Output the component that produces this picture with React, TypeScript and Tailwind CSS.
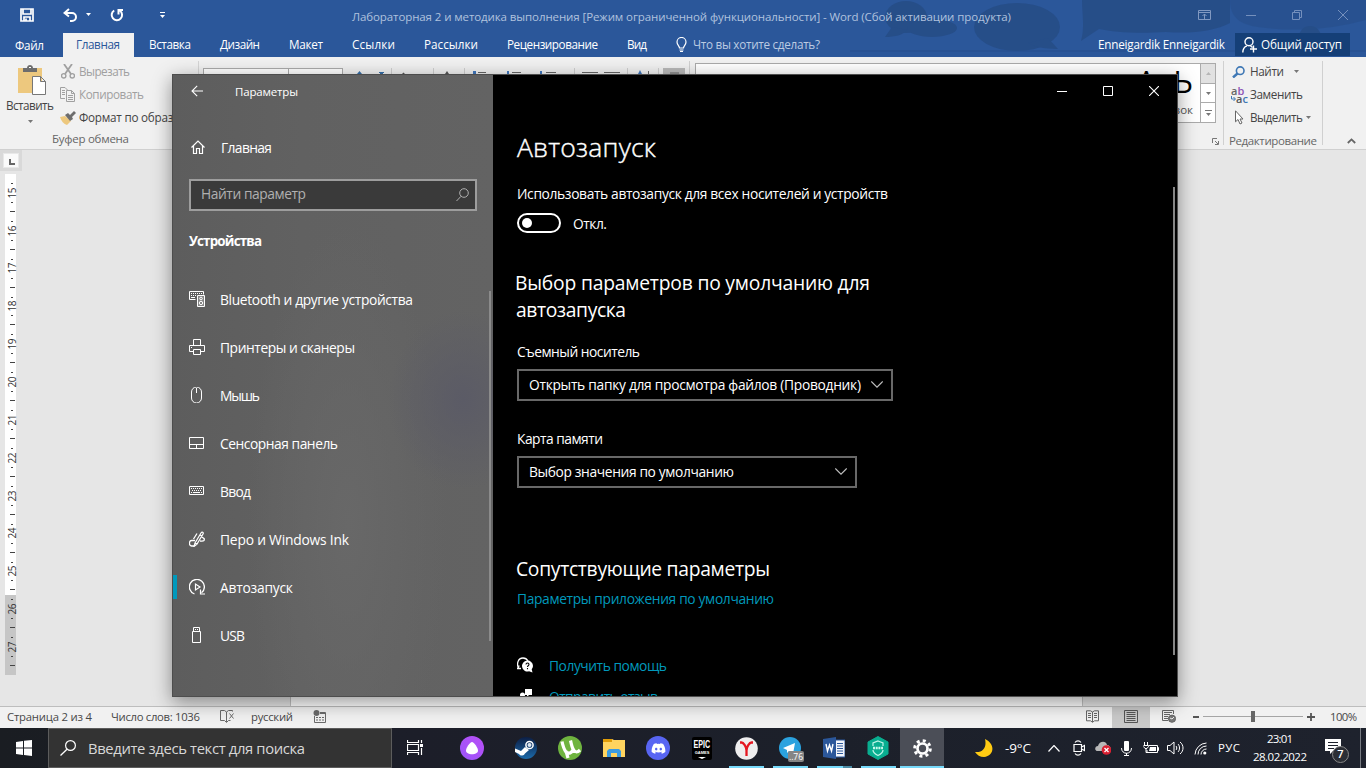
import React, { useLayoutEffect, useRef, useState } from "react";
import { FaDiscord } from "react-icons/fa";

/** Single line of text whose tracking is adjusted to fill the width of its box. */
function Fit({ className, children }: { className: string; children: string }) {
  const box = useRef<HTMLSpanElement>(null);
  const inner = useRef<HTMLSpanElement>(null);
  const [spacing, setSpacing] = useState(0);
  useLayoutEffect(() => {
    if (!box.current || !inner.current) return;
    const natural = inner.current.getBoundingClientRect().width;
    setSpacing((box.current.clientWidth - natural) / Math.max(1, children.length - 1));
  }, [children]);
  return (
    <span ref={box} className={`block shrink-0 whitespace-nowrap ${className}`}>
      <span ref={inner} style={{ letterSpacing: `${spacing}px` }}>
        {children}
      </span>
    </span>
  );
}

function Ico({ className, box, children }: { className: string; box: string; children: React.ReactNode }) {
  return (
    <svg className={`block shrink-0 ${className}`} viewBox={box} fill="none" stroke="currentColor" strokeWidth="1">
      {children}
    </svg>
  );
}

function Caret({ className = "" }: { className?: string }) {
  return (
    <Ico className={`h-[3px] w-[5px] ${className}`} box="0 0 5 3">
      <path d="M0 0h5L2.5 3z" fill="currentColor" stroke="none" />
    </Ico>
  );
}

function TitleBar() {
  return (
    <div className="flex h-[33px] items-center text-white">
      <Ico className="ml-5 mt-[-3px] h-[14px] w-[14px]" box="0 0 14 14">
        <path d="M1 1h12v12H1zM3 1v5h8V1M4 13V9h6v4M6 10.500v2" strokeWidth="1.700" />
      </Ico>
      <Ico className="ml-[29px] mt-[-4px] h-[14px] w-[15px]" box="0 0 15 14">
        <path d="M6 1 1.500 5 6 8.500M2 5h7a4 4 0 0 1 0 8H7" strokeWidth="2" />
      </Ico>
      <Caret className="ml-[8px] mt-[-4px]" />
      <Ico className="ml-[19px] mt-[-4px] h-[14px] w-[14px]" box="0 0 14 14">
        <path d="M4.200 2.500A5.200 5.200 0 1 0 10 2.800M8.500 6.500V2H13" strokeWidth="2" />
      </Ico>
      <Ico className="ml-[36px] mt-[-3px] h-[6px] w-[5px]" box="0 0 5 6">
        <path d="M0 .5h5" />
        <path d="M0 3h5L2.500 6z" fill="currentColor" stroke="none" />
      </Ico>
      <Fit className="ml-[187px] w-[659px] text-[11.500px] leading-[33px] text-[#b0c2de]">
        Лабораторная 2 и методика выполнения [Режим ограниченной функциональности] - Word (Сбой активации продукта)
      </Fit>
      <Ico className="ml-[187px] mt-[-3px] h-[10px] w-[13px] text-[#8199c1]" box="0 0 13 10">
        <path d="M.5.5h12v9H.5zM.5 2.500h12M6.500 9V4M4.500 6l2-2 2 2" />
      </Ico>
      <Ico className="ml-[35px] mt-[-3px] h-[10px] w-[10px] text-[#7590bd]" box="0 0 10 10">
        <path d="M0 5.500h10" />
      </Ico>
      <Ico className="ml-[36px] mt-[-3px] h-[10px] w-[10px] text-[#7590bd]" box="0 0 10 10">
        <path d="M.5 2.500h7v7h-7zM2.500 2.500v-2h7v7h-2" />
      </Ico>
      <Ico className="ml-[36px] mt-[-3px] h-[10px] w-[10px] text-[#7590bd]" box="0 0 10 10">
        <path d="m0 0 10 10M10 0 0 10" />
      </Ico>
    </div>
  );
}

function TabBar() {
  return (
    <div className="flex h-6 text-[11.700px] leading-[23px] text-white">
      <Fit className="ml-[15px] w-[29px] pt-px">Файл</Fit>
      <div className="ml-[19px] w-[71px] bg-[#f1f1f1] pl-[13px] text-[#2b579a]">
        <Fit className="w-[44px]">Главная</Fit>
      </div>
      <Fit className="ml-[15px] w-[42px]">Вставка</Fit>
      <Fit className="ml-[29px] w-[40px]">Дизайн</Fit>
      <Fit className="ml-[29px] w-[34px]">Макет</Fit>
      <Fit className="ml-[29px] w-[43px]">Ссылки</Fit>
      <Fit className="ml-[29px] w-[54px]">Рассылки</Fit>
      <Fit className="ml-[29px] w-[91px]">Рецензирование</Fit>
      <Fit className="ml-[29px] w-[20px]">Вид</Fit>
      <Ico className="ml-[29px] mt-1 h-[15px] w-[11px]" box="0 0 11 15">
        <path d="M3.500 11c0-2-2.500-3-2.500-6a4.500 4.500 0 0 1 9 0c0 3-2.500 4-2.500 6zM3.500 13h4M4 14.500h3" strokeWidth="1.200" />
      </Ico>
      <Fit className="ml-[6px] w-[127px] text-[#bccbe2]">Что вы хотите сделать?</Fit>
      <Fit className="ml-[278px] w-[127px]">Enneigardik Enneigardik</Fit>
      <div className="ml-[10px] flex h-[23px] w-[115px] bg-[#153f77]">
        <Ico className="ml-[7px] mt-[4px] h-4 w-[16px]" box="0 0 16 16">
          <circle cx="7" cy="4.800" r="4" strokeWidth="1.400" />
          <path d="M.8 15.500c0-4 2.200-6 4.200-6.700M8.500 9l2 1.500M11.500 8.500v7M8 12h7" strokeWidth="1.400" />
        </Ico>
        <Fit className="ml-[3px] w-[81px]">Общий доступ</Fit>
      </div>
    </div>
  );
}

function WordHeader() {
  return (
    <header className="relative h-[57px] shrink-0 bg-[#2b579a]">
      <svg className="absolute left-[850px] top-0 h-[57px] w-[516px]" viewBox="0 0 516 57">
        <g fill="#254b83" opacity=".75">
          <ellipse cx="56" cy="17" rx="21" ry="16" />
          <path d="M42 27 35 37c10 0 18-2 22-7z" />
          <ellipse cx="167" cy="27" rx="43" ry="24" />
          <path d="M198 38l10 11c-14 0-26-3-30-6z" />
          <ellipse cx="82" cy="28" rx="25" ry="9" />
          <path d="M232 0h148v23c-15 8-38 11-64 9-30 2-52 0-67-3l-18 12c4-13 1-27 1-41z" />
          <path d="M380 0h136v20c-30 8-60 12-100 8-20-2-36-6-36-28z" opacity=".55" />
          <circle cx="460" cy="37" r="11" />
        </g>
        <path d="M0 51h516" stroke="#274f8d" />
      </svg>
      <div className="relative">
        <TitleBar />
        <TabBar />
      </div>
    </header>
  );
}

function ClipboardGroup() {
  return (
    <div className="flex w-[198px] shrink-0 flex-col">
      <div className="flex h-[75px]">
        <div className="flex w-[60px] shrink-0 flex-col items-center pt-[8px]">
          <Ico className="ml-1 h-[30px] w-[28px]" box="0 0 28 30">
            <path d="M0 3h24v25H0z" fill="#edc87e" stroke="none" />
            <path d="M5 7V3h4c0-4 6-4 6 0h4v4z" fill="#6d6d6d" stroke="none" />
            <path d="M11 2h2v1h-2z" fill="#fff" stroke="none" />
            <path d="M14.500 11.500h8l5 5v13h-13zM22.500 11.500v5h5" fill="#fff" stroke="#777" />
          </Ico>
          <Fit className="mt-[2px] w-[48px] text-[11.700px] leading-[17px] text-[#444]">Вставить</Fit>
          <Caret className="mt-[6px] text-[#777]" />
        </div>
        <div className="w-[138px] overflow-hidden pt-[3px] text-[11.700px] leading-[23px] text-[#444]">
          <div className="flex h-[23px] items-center text-[#a0a0a0]">
            <Ico className="ml-[1px] h-[15px] w-[14px]" box="0 0 14 15">
              <circle cx="2.700" cy="11.800" r="2.200" strokeWidth="1.400" />
              <circle cx="11.300" cy="11.800" r="2.200" strokeWidth="1.400" />
              <path d="M3 0l7 10M11 0 4 10" strokeWidth="1.800" />
            </Ico>
            <Fit className="ml-1 w-[51px]">Вырезать</Fit>
          </div>
          <div className="flex h-[23px] items-center text-[#a0a0a0]">
            <Ico className="h-[15px] w-[15px]" box="0 0 15 15">
              <path d="M5 11.500H.5V.5H5l3 3M2 3.500h3M2 5.500h3M2 7.500h3M6.500 3.500h5l3 3v8h-8zM11.500 3.500v3h3M8 8.500h5M8 10.500h5M8 12.500h5" />
            </Ico>
            <Fit className="ml-1 w-[65px]">Копировать</Fit>
          </div>
          <div className="flex h-[23px] items-center">
            <Ico className="h-[14px] w-[16px]" box="0 0 16 14">
              <path d="M0 6 5 5l6 5-4 4C4 13 1 10 0 6z" fill="#edc87e" stroke="none" />
              <path d="m5 4 3-2 2 2 4-4 2 2-4 4 1 2-3 2z" fill="#6d6d6d" stroke="none" />
            </Ico>
            <Fit className="ml-[3px] w-[107px]">Формат по образцу</Fit>
          </div>
        </div>
      </div>
      <Fit className="ml-[52px] w-[77px] text-[11.500px] leading-[20px] text-[#666]">Буфер обмена</Fit>
    </div>
  );
}

function Ribbon() {
  return (
    <div className="flex h-[93px] shrink-0 border-b border-[#d0d0d0] bg-[#f1f1f1]">
      <ClipboardGroup />
      <div className="mt-1 h-[84px] w-px shrink-0 bg-[#d5d5d5]" />
      <div className="ml-[4px] mt-[11px] flex h-6 w-[140px] shrink-0 border border-[#ababab] bg-white">
        <div className="w-[85px] border-r border-[#ababab]" />
      </div>
      <svg className="mt-[11px] block h-6 w-[343px] shrink-0" viewBox="0 0 343 24">
        <path d="M48.500 0v20M90.500 0v20M121.500-7v27M231.500 0v20M284.500 0v20M315.500 0v20" stroke="#cfcfcf" />
        <path d="M14 6l2.500-3 2.500 3M36 4h5v1h-1v2h-3V5h-1z" fill="#366fa9" />
        <path d="M59 6l1.500-1.500L62 6M102 6l2-3 2 3" fill="#555" />
        <path d="M130 3h3v3h-3zM164 3h2v4h-2zM197 3h2v4h-2zM295 6l2-4 2 4z" fill="#4178be" />
        <path d="M135 4.500h8M169 4.500h9M203 4.500h10M239 4.500h16M261 4.500h16M305.500 3v8" stroke="#666" />
        <path d="M320 0h22v20h-22z" fill="#b9b9b9" />
        <path d="M327 5h9" stroke="#666" />
      </svg>
      <div className="ml-[3px] mt-1 h-[84px] w-px shrink-0 bg-[#d0d0d0]" />
      <div className="ml-[5px] mt-[6px] flex h-[60px] w-[521px] shrink-0 border border-[#aaa] bg-white">
        <div className="flex grow flex-col items-end overflow-hidden pr-[7px] text-[#555]">
          <span className="mt-[-5px] text-[31px] leading-[44px] text-black">АаЬ</span>
          <span className="text-[11.500px] leading-[14px]">Заголовок</span>
        </div>
        <div className="flex w-[15px] shrink-0 flex-col border-l border-[#ababab] text-[#777]">
          <div className="flex h-[20px] items-center justify-center border-b border-[#ababab] bg-[#e1e1e1] text-[#b5b5b5]"><Caret className="rotate-180" /></div>
          <div className="flex h-[19px] items-center justify-center border-b border-[#ababab]"><Caret /></div>
          <div className="flex grow flex-col items-center justify-center gap-[2px]"><span className="h-px w-[7px] bg-[#777]" /><Caret /></div>
        </div>
      </div>
      <Ico className="-ml-1 mt-[81px] h-[7px] w-[7px] text-[#777]" box="0 0 7 7">
        <path d="M.5 5V.5H5M3 3l3 3M6.500 3v3.500H3" />
      </Ico>
      <div className="ml-[4px] mt-1 h-[84px] w-px shrink-0 bg-[#d0d0d0]" />
      <div className="flex w-[98px] shrink-0 flex-col pt-[3px] text-[11.700px] leading-[23px] text-[#444]">
        <div className="flex h-[23px] items-center">
          <Ico className="ml-2 h-3 w-[13px] text-[#3f78b5]" box="0 0 13 12">
            <circle cx="8.200" cy="4.700" r="3.800" strokeWidth="1.600" />
            <path d="M5.500 7.500 1 11.500" strokeWidth="2.400" />
          </Ico>
          <Fit className="ml-[5px] w-[34px]">Найти</Fit>
          <Caret className="ml-[10px] text-[#777]" />
        </div>
        <div className="flex h-[23px] items-center">
          <div className="ml-[7px] flex w-[18px] flex-col text-[11px] font-semibold leading-[8px]">
            <span className="text-[#666]">a<span className="text-[#8d55b6]">b</span></span>
            <span className="flex text-[#555]">
              <Ico className="mt-px h-[5px] w-[5px] text-[#3f78b5]" box="0 0 5 5"><path d="M.5 0v3H4M2.500 1 4.500 3l-2 2" /></Ico>
              a<span className="text-[#3f78b5]">c</span>
            </span>
          </div>
          <Fit className="ml-[1px] w-[53px]">Заменить</Fit>
        </div>
        <div className="flex h-[23px] items-center">
          <Ico className="ml-[11px] h-[15px] w-[9px] text-[#666]" box="0 0 9 15">
            <path d="M.5.8v11L3 9.500l2 4.500 2-1-2-4h3z" fill="#fff" />
          </Ico>
          <Fit className="ml-[6px] w-[53px]">Выделить</Fit>
          <Caret className="ml-[3px] text-[#777]" />
        </div>
        <Fit className="ml-[5px] mt-[3px] w-[88px] text-[11.500px] leading-[18px] text-[#666]">Редактирование</Fit>
      </div>
      <div className="mt-1 h-[84px] w-px shrink-0 bg-[#d0d0d0]" />
      <Ico className="ml-[24px] mt-[81px] h-[6px] w-[9px] text-[#666]" box="0 0 9 6">
        <path d="m.8 5 3.700-3.600L8.200 5" strokeWidth="1.800" />
      </Ico>
    </div>
  );
}

const rulerMarks = [15, 16, 17, 18, 19, 20, 21, 22, 23, 24, 25, 26, 27];

function DocumentArea() {
  return (
    <div className="flex h-[556px] shrink-0 bg-[#e6e6e6]">
      <div className="w-[22px]">
        <div className="h-[21px] bg-[#d9d9d9] pl-[3px] pt-[3px]">
          <div className="flex h-[15px] w-[16px] items-center justify-center border border-[#e8e8e8] bg-[#fafafa]">
            <div className="ml-[2px] mt-[2px] h-[6px] w-[6px] border-b-2 border-l-2 border-[#666]" />
          </div>
        </div>
        <div className="ml-[5px] mt-[3px] h-[501px] w-[11px] bg-[linear-gradient(#fff_0_421px,#c6c6c6_421px)]">
          {rulerMarks.map((n) => (
            <div key={n} className="flex h-[37.870px] flex-col items-center pl-[3px]">
              <div className="mt-[9px] h-px w-[2px] bg-[#444]" />
              <div className="flex h-[18px] items-center">
                <span className="rotate-180 text-[10px] leading-[10px] tracking-[-0.500px] text-[#333] [writing-mode:vertical-rl]">{n}</span>
              </div>
              <div className="h-px w-[2px] bg-[#444]" />
              <div className="mt-[8px] h-px w-[5px] shrink-0 bg-[#444]" />
            </div>
          ))}
        </div>
      </div>
      <div className="ml-[268px] w-[793px] border-x border-[#c3c3c3] bg-white" />
    </div>
  );
}

function StatusBar() {
  return (
    <div className="flex h-[22px] shrink-0 items-center border-t border-[#bdbdbd] bg-[#f1f1f1] text-[11.300px] leading-[20px] text-[#484848]">
      <Fit className="ml-[7px] mt-[-2px] w-[85px]">Страница 2 из 4</Fit>
      <Fit className="ml-[19px] mt-[-2px] w-[89px]">Число слов: 1036</Fit>
      <Ico className="ml-5 mt-[-2px] h-[13px] w-[15px] text-[#6a6a6a]" box="0 0 15 13">
        <path d="M6.500 2 4.500.5H.5v10h4l2 2 2-2h2M6.500 2v10M6.500 2l2-1.500h4v1M9.500 3.500l4 5M13.500 3.500l-4 5" />
      </Ico>
      <Fit className="ml-4 mt-[-2px] w-[42px]">русский</Fit>
      <Ico className="ml-5 mt-[-2px] h-[13px] w-[13px] text-[#6a6a6a]" box="0 0 13 13">
        <path d="M1.500 6v6.500h11V2.500H7M7 3.500h5M3 7.500h2M6 7.500h2M9 7.500h2M3 10h2M6 10h2M9 10h2" />
        <circle cx="3.500" cy="3" r="3" fill="currentColor" stroke="none" />
      </Ico>
      <Ico className="ml-[760px] mt-[-2px] h-[13px] w-[13px] text-[#666]" box="0 0 13 13">
        <path d="M6.500 2 4.500.8H.5v10h4l2 1.500 2-1.500h4V.8h-4zM6.500 2v10M2 3.500h3M2 5.500h3M2 7.500h3M8 3.500h3M8 5.500h3M8 7.500h3" />
      </Ico>
      <div className="ml-[13px] flex h-[21px] w-[38px] items-center justify-center bg-[#c9c9c9]">
        <Ico className="mt-[-2px] h-[13px] w-[14px] text-[#555]" box="0 0 14 13">
          <path d="M.5.5h13v12H.5zM2.500 2.500h9M2.500 4.500h9M2.500 6.500h9M2.500 8.500h9M2.500 10.500h9" />
        </Ico>
      </div>
      <Ico className="ml-3 mt-[-2px] h-[13px] w-[14px] text-[#666]" box="0 0 14 13">
        <path d="M6 10.500H.5V.5h11V4M2 2.500h8M2 4.500h6M2 6.500h4M2 8.500h4" />
        <circle cx="10" cy="8.700" r="3.600" fill="#777" />
        <path d="M8 8l2 1 2-2" stroke="#eee" />
      </Ico>
      <div className="ml-[17px] mt-[-1px] h-[2px] w-[6px] bg-[#555]" />
      <div className="ml-[4px] mt-[-2px] flex w-[100px] items-center">
        <div className="h-px w-12 bg-[#a5a5a5]" />
        <div className="h-[11px] w-1 bg-[#666]" />
        <div className="h-px w-12 bg-[#a5a5a5]" />
      </div>
      <Ico className="ml-1 mt-[-1px] h-2 w-2 text-[#555]" box="0 0 8 8">
        <path d="M0 4h8M4 0v8" strokeWidth="1.800" />
      </Ico>
      <Fit className="ml-[15px] mt-[-2px] w-[27px]">100%</Fit>
    </div>
  );
}

const navItems = [
  {
    label: "Bluetooth и другие устройства",
    width: "w-[193px]",
    icon: <><path d="M6.500 8.500H.5v-8h14v3" /><path d="M2 2.500h1M4 2.500h1M6 2.500h1M8 2.500h1M10 2.500h1M12 2.500h1M2 4.500h1M4 4.500h1M6 4.500h1M2 6.500h4" /><path d="M8.500 4.500h7v11h-7z" fill="#ffffff40" /><circle cx="12" cy="7.500" r="1.300" /><circle cx="12" cy="12" r="1.700" /></>,
  },
  { label: "Принтеры и сканеры", width: "w-[135px]", icon: <path d="M4.500 6V.5h7V6M4 12.500H.5v-6h15v6H12M2 8.500h1M4.500 10.500h7v5h-7z" /> },
  { label: "Мышь", width: "w-[40px]", icon: <path d="M2.500 5a4.500 4.500 0 0 1 10 0v6a4.500 4.500 0 0 1-10 0zM7.500 1v5" /> },
  { label: "Сенсорная панель", width: "w-[118px]", icon: <path d="M.5 2.500h14v11H.5zM.5 9.500h14M7.500 9.500v4" /> },
  { label: "Ввод", width: "w-[31px]", icon: <path d="M.5 3.500h14v8H.5zM2 5.500h1M4 5.500h1M6 5.500h1M8 5.500h1M10 5.500h1M12 5.500h1M3 7.500h1M5 7.500h1M7 7.500h1M9 7.500h1M11 7.500h1M2 9.500h1M4 9.500h7M12 9.500h1" /> },
  { label: "Перо и Windows Ink", width: "w-[129px]", icon: <><path d="M5 15.500 6 12l6-10c1-1.500 3-.5 2 1L8 13zM6 12l2 1M11 4l2 1" strokeWidth="1.200" /><path d="M6 9.500H2.500c-2.500 0-3 5 0 5.500H5M8 2.500 4.500 8M12.500 6c2 1 3.500 1.500 2.500 3.500-1 1-2.500.5-4 .5" strokeWidth="1.300" /></> },
  { label: "Автозапуск", width: "w-[73px]", icon: <><path d="M5.500 15A7.500 7.500 0 1 1 12.500 13.800" strokeWidth="1.300" /><path d="M11.500 10.500v4.500H16M6.500 5v6L11 8z" strokeWidth="1.200" /></> },
  { label: "USB", width: "w-[25px]", icon: <path d="M3.500 4.500h8v11h-8zM4.500 4.500v-4h6v4M6 2.500h1M8 2.500h1" /> },
];

function Sidebar() {
  return (
    <aside className="flex w-[320px] shrink-0 bg-[radial-gradient(ellipse_75px_90px_at_290px_325px,#5b5b66_0%,#5b5b6600_100%),radial-gradient(ellipse_100px_300px_at_175px_450px,#686868_0%,#68686800_100%),radial-gradient(ellipse_140px_140px_at_240px_40px,#64636200_0%,#64636200_100%),linear-gradient(90deg,#5d5d5d_0%,#616161_40%,#636363_100%)] text-[13.800px] text-white">
      <div className="flex w-[316px] flex-col">
        <div className="flex h-[34px] items-center">
          <Ico className="ml-[18px] mt-[-2px] h-3 w-3" box="0 0 12 12">
            <path d="M12 6H1M6.200.8 1 6l5.200 5.200" strokeWidth="1.100" />
          </Ico>
          <Fit className="ml-[32px] w-[63px] text-[11.500px]">Параметры</Fit>
        </div>
        <div className="mt-[26px] flex h-6 items-center">
          <Ico className="ml-[18px] h-[14px] w-[14px]" box="0 0 14 14">
            <path d="M.5 7.500 7 1l6.500 6.500M2.500 6v7.500h3V8.500h3v5h3V6" strokeWidth="1.200" />
          </Ico>
          <Fit className="ml-[16px] mt-[2px] w-[51px]">Главная</Fit>
        </div>
        <div className="ml-4 mt-5 flex h-8 w-[288px] items-center justify-between border-2 border-[#9d9d9d] bg-[#3a3a3a] pl-[10px] pr-[6px] text-[#b0b0b0]">
          <Fit className="mt-[-2px] w-[105px]">Найти параметр</Fit>
          <Ico className="h-[14px] w-[13px]" box="0 0 13 14">
            <circle cx="8" cy="5" r="4.300" />
            <path d="M5 8.300.5 13" />
          </Ico>
        </div>
        <Fit className="ml-4 mt-5 w-[73px] text-[13.400px] font-bold leading-5">Устройства</Fit>
        <nav className="mt-[24px]">
          {navItems.map((item) => (
            <div key={item.label} className="flex h-12 items-center">
              <div className={`h-6 w-1 ${item.label === "Автозапуск" ? "bg-[#0099bc]" : ""}`} />
              <Ico className="ml-3 mt-[-1px] h-4 w-4" box="0 0 16 16">{item.icon}</Ico>
              <Fit className={`ml-[15px] mt-[2px] ${item.width}`}>{item.label}</Fit>
            </div>
          ))}
        </nav>
      </div>
      <div className="mt-[216px] h-[350px] w-[2px] bg-[#8b8b8b]" />
    </aside>
  );
}

function Select({ className, textWidth, children }: { className: string; textWidth: string; children: string }) {
  return (
    <div className={`flex h-8 shrink-0 items-center justify-between border-2 border-[#686868] pl-[10px] pr-[8px] ${className}`}>
      <Fit className={`mt-px ${textWidth}`}>{children}</Fit>
      <Ico className="mt-[-1px] h-[7px] w-[12px] text-[#c0c0c0]" box="0 0 12 7">
        <path d="m.3.500 5.700 5.700L11.700.5" strokeWidth="1.100" />
      </Ico>
    </div>
  );
}

function SettingsContent() {
  return (
    <main className="flex grow flex-col overflow-hidden bg-black text-[13.800px] text-white">
      <div className="flex h-[34px] shrink-0 items-center justify-end gap-9 pr-[18px]">
        <Ico className="mt-[-2px] h-[10px] w-[10px]" box="0 0 10 10"><path d="M0 5.500h10" /></Ico>
        <Ico className="mt-[-2px] h-[10px] w-[10px]" box="0 0 10 10"><path d="M.5.5h9v9h-9z" /></Ico>
        <Ico className="mt-[-2px] h-[10px] w-[10px]" box="0 0 10 10"><path d="m0 0 10 10M10 0 0 10" strokeWidth="1.100" /></Ico>
      </div>
      <div className="flex grow justify-between overflow-hidden pl-6 pr-[2px]">
        <div className="flex flex-col">
          <Fit className="mt-[20px] w-[139px] text-[26.500px] font-light leading-[36px] [-webkit-text-stroke:0.4px_#fff]">Автозапуск</Fit>
          <Fit className="mt-[19px] w-[371px] leading-5">Использовать автозапуск для всех носителей и устройств</Fit>
          <div className="mt-[9px] flex h-5 shrink-0 items-center">
            <div className="flex h-5 w-11 items-center rounded-full border-2 border-white pl-[3px]">
              <div className="h-[10px] w-[10px] rounded-full bg-white" />
            </div>
            <Fit className="ml-3 mt-[2px] w-[34px]">Откл.</Fit>
          </div>
          <Fit className="ml-[-2px] mt-[36px] w-[355px] text-[19.300px] leading-[27px]">Выбор параметров по умолчанию для</Fit>
          <Fit className="ml-[-1px] w-[110px] text-[19.300px] leading-[27px]">автозапуска</Fit>
          <Fit className="mt-[19px] w-[123px] leading-5">Съемный носитель</Fit>
          <Select className="mt-[7px] w-[376px]" textWidth="w-[332px]">Открыть папку для просмотра файлов (Проводник)</Select>
          <Fit className="mt-[28px] w-[86px] leading-5">Карта памяти</Fit>
          <Select className="mt-[7px] w-[340px]" textWidth="w-[205px]">Выбор значения по умолчанию</Select>
          <Fit className="ml-[-1px] mt-[67px] w-[254px] text-[19.300px] leading-[28px]">Сопутствующие параметры</Fit>
          <Fit className="mt-[6px] w-[257px] leading-5 text-[#0099bc]">Параметры приложения по умолчанию</Fit>
          <div className="mt-[46px] flex h-5 shrink-0 items-center">
            <Ico className="h-4 w-4" box="0 0 16 16">
              <path d="M2 12c-3-5-1-11 4-11 2.500 0 4 1.200 5 3M2 8.500c0 1-.5 2-1.500 3H4" strokeWidth="1.300" />
              <path d="M16 9a5.500 5.500 0 1 0-4 5.300l3.500 1.200-.8-3.200A6 6 0 0 0 16 9z" fill="#fff" stroke="none" />
              <path d="M9 7.500c0-2 3-2 3 0 0 1-1.500 1-1.500 2.500M10.500 11v1.300" stroke="#000" strokeWidth="1.100" />
            </Ico>
            <Fit className="ml-4 mt-[2px] w-[118px] text-[#0099bc]">Получить помощь</Fit>
          </div>
          <div className="mt-[11px] flex h-5 shrink-0 items-center">
            <Ico className="mt-[2px] h-4 w-4" box="0 0 16 16">
              <path d="M8 0h7v6h-3l-2 2V6H8zM3 6a2.500 2.500 0 1 1 5 0 2.500 2.500 0 0 1-5 0M1 15c0-7 9-7 9 0" fill="#fff" stroke="none" />
            </Ico>
            <Fit className="ml-4 mt-[2px] w-[109px] text-[#0099bc]">Отправить отзыв</Fit>
          </div>
        </div>
        <div className="mt-[78px] h-[468px] w-[2px] shrink-0 bg-[#858585]" />
      </div>
    </main>
  );
}

function SettingsWindow() {
  return (
    <div className="absolute left-[172px] top-[74px] flex h-[623px] w-[1006px] overflow-hidden border border-[#4d4d4d] shadow-[0_5px_18px_rgba(0,0,0,0.42)]">
      <Sidebar />
      <SettingsContent />
    </div>
  );
}

function AppCell({ children, running = false, active = false, stacked = false }: { children: React.ReactNode; running?: boolean; active?: boolean; stacked?: boolean }) {
  return (
    <div className={`flex h-10 w-11 shrink-0 flex-col items-center ${active ? "bg-[#4b4e57]" : ""}`}>
      <div className="flex h-[38px] items-center justify-center pt-[2px]">{children}</div>
      {running && (
        <div className={`flex h-[2px] ${active ? "w-11" : "w-[35px]"} bg-[#76d9fa]`}>
          {stacked && <div className="ml-[26px] w-[9px] bg-[#4c8ca5]" />}
        </div>
      )}
    </div>
  );
}

function Taskbar() {
  return (
    <footer className="flex h-10 shrink-0 items-center bg-[linear-gradient(90deg,#1a1d22,#1c1e29_30%,#1c202a_60%,#1e222d)] text-white">
      <Ico className="ml-4 h-4 w-4" box="0 0 16 16">
        <path d="m0 2 7-1v6.500H0zM8 .8 16 0v7.500H8zM0 8.500h7V15l-7-1zM8 8.500h8V16l-8-1z" fill="#fff" stroke="none" />
      </Ico>
      <div className="ml-4 flex h-10 w-[344px] shrink-0 items-center border border-[#5c5c5c] bg-[#333]">
        <Ico className="ml-[11px] h-4 w-4" box="0 0 16 16">
          <circle cx="10.500" cy="5.500" r="4.900" strokeWidth="1.200" />
          <path d="M7 9.200.5 15.500" strokeWidth="1.300" />
        </Ico>
        <Fit className="ml-3 w-[217px] text-[14.800px] text-[#d8d8d8]">Введите здесь текст для поиска</Fit>
      </div>
      <Ico className="ml-[15px] mt-[-1px] h-[15px] w-[17px]" box="0 0 17 15">
        <path d="M.5 0v2.500h11V0M.5 4.500h11v6H.5zM.5 15v-2.500h11V15M14.500 0v3M14.500 8v7" strokeWidth="1.200" />
        <path d="M13 4h3v3h-3z" fill="#fff" stroke="none" />
      </Ico>
      <div className="ml-[26px] flex">
        <AppCell>
          <Ico className="h-6 w-6" box="0 0 24 24">
            <defs><linearGradient id="alice" x1="0" y1="1" x2="1" y2="0"><stop stopColor="#9b55fa" /><stop offset="1" stopColor="#b94ff6" /></linearGradient></defs>
            <circle cx="12" cy="12" r="12" fill="url(#alice)" stroke="none" />
            <path d="M12 6c2 0 6 6 6 8.500 0 5-12 5-12 0C6 12 10 6 12 6z" fill="#fff" stroke="none" />
          </Ico>
        </AppCell>
        <div className="w-[10px]" />
        <AppCell>
          <Ico className="h-[22px] w-[22px]" box="0 0 22 22">
            <defs><linearGradient id="steam" x1="0" y1="0" x2="0" y2="1"><stop stopColor="#0c1e45" /><stop offset="1" stopColor="#1c6aa9" /></linearGradient></defs>
            <circle cx="11" cy="11" r="11" fill="url(#steam)" stroke="none" />
            <circle cx="14.500" cy="8" r="3.600" stroke="#fff" strokeWidth="1.500" />
            <circle cx="14.500" cy="8" r="2" fill="#dce5ef" stroke="none" />
            <path d="M0 11.500 6 14l4-4 4 3-4 3.500A3.400 3.400 0 0 1 4 17l-4-2z" fill="#fff" stroke="none" />
          </Ico>
        </AppCell>
        <AppCell>
          <Ico className="h-6 w-6" box="0 0 24 24">
            <circle cx="12" cy="12" r="12" fill="#6fb43f" stroke="none" />
            <path d="M4 5.500c1 5 2 8 4 10.500 3 2 6 1 6.500-2M12.500 4.500c1.500 6 2 11 6 11.500 1.500 0 2.500-1 3.500-2M8 15l2 7" stroke="#fff" strokeWidth="3.200" />
          </Ico>
        </AppCell>
        <AppCell>
          <Ico className="h-[19px] w-[22px]" box="0 0 22 19">
            <path d="M0 0h9l2 1h11v17H0z" fill="#ffd45f" stroke="none" />
            <path d="M0 0h9v3H0z" fill="#e19d08" stroke="none" />
            <path d="M4 18v-6l2-2h10l2 2v6h-4v-4H8v4z" fill="#3b9be0" stroke="none" />
          </Ico>
        </AppCell>
        <AppCell>
          <div className="flex h-6 w-6 items-center justify-center rounded-full bg-[#5865f2]"><FaDiscord className="h-[15px] w-[15px]" /></div>
        </AppCell>
        <AppCell>
          <div className="flex h-[23px] w-[20px] flex-col items-center rounded-[2px] bg-black pt-px">
            <span className="font-['Liberation_Sans'] text-[11px] font-bold leading-[13px] [transform:scaleX(.65)]">EPIC</span>
            <span className="font-['Liberation_Sans'] text-[4px] font-bold leading-[4px]">GAMES</span>
            <Ico className="mt-[2px] h-[2px] w-2" box="0 0 8 2"><path d="M0 0h8L4 2z" fill="#fff" stroke="none" /></Ico>
          </div>
        </AppCell>
        <AppCell running>
          <Ico className="h-[23px] w-[23px]" box="0 0 23 23">
            <circle cx="11.500" cy="11.500" r="11.300" fill="#eee" stroke="none" />
            <path d="M5 5.500h1.500c2 0 5 4.500 5 8V19M18 5.500h-1.500c-2 0-5 4.500-5 8" stroke="#e51721" strokeWidth="2.300" />
          </Ico>
        </AppCell>
        <AppCell running>
          <div className="relative">
            <Ico className="h-[22px] w-[22px]" box="0 0 22 22">
              <circle cx="11" cy="11" r="11" fill="#2ba2df" stroke="none" />
              <path d="m4 11 12-5-2 11-4-3-2 2v-3z" fill="#fff" stroke="none" />
            </Ico>
            <span className="absolute left-[9px] top-[14px] h-[11px] w-4 rounded-[2px] bg-[#858585] text-center text-[8.500px] leading-[11px]">..76</span>
          </div>
        </AppCell>
        <AppCell running stacked>
          <Ico className="h-[22px] w-[22px]" box="0 0 22 22">
            <path d="M12 3h10v17H12z" fill="#f4f6fa" stroke="#2b579a" />
            <path d="M14 6.500h6M14 9h6M14 11.500h6M14 14h6M14 16.500h6" stroke="#2b579a" strokeWidth="1.200" />
            <path d="M0 2 13 0v22L0 20z" fill="#2b579a" stroke="none" />
            <path d="m3 7 1.500 7L6.500 8l2 6L10 7" stroke="#fff" strokeWidth="1.400" />
          </Ico>
        </AppCell>
        <AppCell running>
          <Ico className="h-6 w-[22px]" box="0 0 22 24">
            <path d="M11 .5 21 6v12l-10 5.500L1 18V6z" fill="#09ae90" stroke="#09ae90" strokeLinejoin="round" />
            <path d="m11 5 5 2v7c0 3-3 4.500-5 5.500C9 18.500 6 17 6 14V7z" stroke="#bff5e8" strokeWidth="1.200" />
            <path d="M5 10h12v4H5z" fill="#09ae90" stroke="none" />
            <path d="M6 12h10" stroke="#c9faed" strokeWidth="2.500" strokeDasharray="2 .7" />
          </Ico>
        </AppCell>
      </div>
      <AppCell running active>
        <Ico className="h-[19px] w-[19px]" box="0 0 19 19">
          <circle cx="9.500" cy="9.500" r="5" strokeWidth="2.700" />
          <circle cx="9.500" cy="9.500" r="7.800" strokeWidth="3" strokeDasharray="3 3.126" />
        </Ico>
      </AppCell>
      <Ico className="ml-[31px] h-[18px] w-[18px]" box="0 0 18 18">
        <path d="M10 0c11 5 9 17-1 18-4 0-7-2-9-5 8 1 12-5 10-13z" fill="#ffcb13" stroke="none" />
      </Ico>
      <Fit className="ml-3 w-[26px] text-[13.500px]">-9°C</Fit>
      <Ico className="ml-[17px] h-[7px] w-3" box="0 0 12 7"><path d="m.5 6.500 5.500-6 5.500 6" strokeWidth="1.200" /></Ico>
      <Ico className="ml-[13px] h-4 w-3" box="0 0 12 16">
        <path d="M2 2.500C3.500.3 6.500.3 8 2.500M2 13.500c1.500 2.200 4.500 2.200 6 0M1 4.500h7.500v7H1zM8.500 7l3-1.500v5L8.500 9" strokeWidth="1.200" />
      </Ico>
      <Ico className="ml-[10px] h-[14px] w-4" box="0 0 16 14">
        <path d="M2 10C-1 9 0 5 3 5c1-5 8-6 9-1 4 0 5 6 1 6z" fill="#b8b8b8" stroke="none" />
        <circle cx="11.500" cy="9" r="4.800" fill="#d92032" stroke="none" />
        <path d="m9.500 7 4 4m0-4-4 4" stroke="#fff" strokeWidth="1.300" />
      </Ico>
      <Ico className="ml-[10px] h-[15px] w-[11px]" box="0 0 11 15">
        <rect x="3" y="0" width="5" height="10" rx="1" fill="#fff" stroke="none" />
        <path d="M.5 7c0 7 10 7 10 0M5.500 12v3M3 14.500h5" />
      </Ico>
      <Ico className="ml-[11px] h-[12px] w-4" box="0 0 16 12">
        <path d="M6 3.500h8.500v7H4V8M14.500 5.500h1v3h-1M1.500 0v3M4.500 0v3M.5 3.500h5v1L4 6.500H2L.5 4.500M3 6.500v4h1" />
        <path d="M7 5h6v4H6z" fill="#fff" stroke="none" />
      </Ico>
      <Ico className="ml-[8px] h-[14px] w-[17px]" box="0 0 17 14">
        <path d="M.5 4.500H3L7 1v12L3 9.500H.5zM9 5c1 1 1 3 0 4M11 3c2 2 2 6 0 8M13 1c4 3 4 9 0 12" />
      </Ico>
      <Ico className="ml-[10px] h-[13px] w-[13px]" box="0 0 13 13">
        <path d="M1 12.500A12 12 0 0 1 12.500 1M4 12.500A8.500 8.500 0 0 1 12.500 4M7 12.500A5.500 5.500 0 0 1 12.500 7" />
        <circle cx="10.800" cy="11" r="1.600" fill="#fff" stroke="none" />
      </Ico>
      <Fit className="ml-[11px] w-[22px] text-[11.500px]">РУС</Fit>
      <div className="ml-[13px] flex h-10 w-[54px] flex-col items-center pt-[2px] text-[11.500px] leading-[18px]">
        <Fit className="w-[26px]">23:01</Fit>
        <Fit className="w-[54px]">28.02.2022</Fit>
      </div>
      <div className="relative ml-[18px] mt-[6px] h-6 w-6 shrink-0">
        <Ico className="h-[15px] w-4" box="0 0 16 15">
          <path d="M0 0h16v12H8l-3 3v-3H0z" fill="#fff" stroke="none" />
          <path d="M3 3.500h10M3 6.500h10M3 9.500h6" stroke="#1e222d" />
        </Ico>
        <span className="absolute left-[7px] top-[7px] flex h-[17px] w-[17px] items-center justify-center rounded-full border border-[#888] bg-[#2b2e35] text-[11px] font-semibold">7</span>
      </div>
      <div className="ml-[11px] h-10 w-px bg-[#777b82]" />
    </footer>
  );
}

export default function App() {
  return (
    <div className="relative flex h-[768px] w-[1366px] flex-col overflow-hidden font-['Open_Sans','Noto_Sans',sans-serif]">
      <WordHeader />
      <Ribbon />
      <DocumentArea />
      <StatusBar />
      <Taskbar />
      <SettingsWindow />
    </div>
  );
}
